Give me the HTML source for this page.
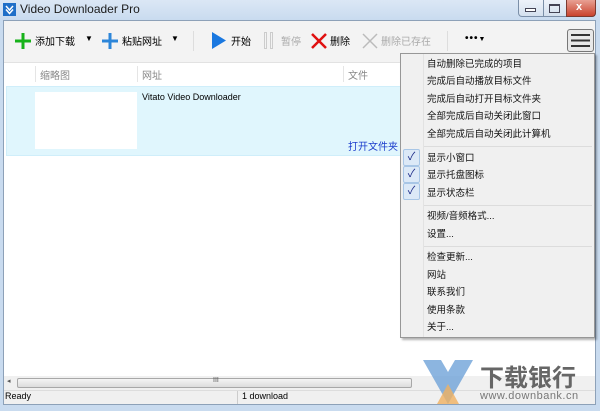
<!DOCTYPE html>
<html><head><meta charset="utf-8"><style>
*{margin:0;padding:0;box-sizing:border-box}
body{width:600px;height:411px;overflow:hidden;background:#c9dbef;font-family:"Liberation Sans","Noto Sans CJK SC",sans-serif;font-size:10px;color:#000;position:relative}
.a{position:absolute}
.t{white-space:nowrap}
.m{position:absolute;left:427px;font-size:9.5px;color:#111;white-space:nowrap;line-height:14px;margin-top:2px}
.c{position:absolute;left:403px;width:17px;height:17px;border:1px solid #a8c6e6;background:#dce9f7;border-radius:2px;color:#1c2a88;text-align:center;font-size:11px;line-height:15px}
</style></head><body>
<div class="a" style="left:0;top:0;width:600px;height:20px;background:linear-gradient(#dbe7f5,#c9dbef)"></div>
<svg class="a" style="left:3px;top:3px" width="13" height="13"><rect width="13" height="13" fill="#1f6fc8"/><path d="M3 3l3.5 4L10 3M3 6.5l3.5 4L10 6.5" stroke="#fff" stroke-width="1.5" fill="none"/></svg>
<div class="a t" style="left:20px;top:2px;font-size:12px;color:#1b1b1b">Video Downloader Pro</div>
<div class="a" style="left:518px;top:0;width:78px;height:17px;border:1px solid #7b8fa8;border-top:none;border-radius:0 0 4px 4px;background:linear-gradient(#eef3fa,#d4e0ee)"></div>
<div class="a" style="left:543px;top:0;width:1px;height:17px;background:#7b8fa8"></div>
<div class="a" style="left:566px;top:0;width:30px;height:17px;background:linear-gradient(#e8a093,#c9432e);border-radius:0 0 4px 0;border:1px solid #7b3a30;border-top:none"></div>
<div class="a t" style="left:576px;top:1px;color:#fff;font-weight:bold;font-size:11px">x</div>
<div class="a" style="left:525px;top:8px;width:11px;height:4px;border:1px solid #445;background:#fff"></div>
<div class="a" style="left:549px;top:4px;width:11px;height:9px;border:1px solid #445;border-top-width:2px"></div>
<div class="a" style="left:3px;top:20px;width:593px;height:385px;background:#fff;border:1px solid #8da1b8"></div>
<div class="a" style="left:4px;top:21px;width:591px;height:42px;background:#f3f3f3;border-bottom:1px solid #e2e2e2"></div>
<svg class="a" style="left:14px;top:32px" width="18" height="18"><path d="M9 1v16M1 9h16" stroke="#17b21a" stroke-width="3"/></svg>
<div class="a t" style="left:35px;top:33px">添加下载</div>
<div class="a t" style="left:85px;top:34px;font-size:8px">▼</div>
<svg class="a" style="left:101px;top:32px" width="18" height="18"><path d="M9 1v16M1 9h16" stroke="#2d86d9" stroke-width="3"/></svg>
<div class="a t" style="left:122px;top:33px">粘贴网址</div>
<div class="a t" style="left:171px;top:34px;font-size:8px">▼</div>
<div class="a" style="left:193px;top:31px;width:1px;height:20px;background:#ddd"></div>
<svg class="a" style="left:211px;top:32px" width="16" height="17"><path d="M1 0L15 8.5 1 17z" fill="#1a78e0"/></svg>
<div class="a t" style="left:231px;top:33px">开始</div>
<div class="a" style="left:264px;top:32px;width:3px;height:17px;border:1px solid #ccc"></div>
<div class="a" style="left:270px;top:32px;width:3px;height:17px;border:1px solid #ccc"></div>
<div class="a t" style="left:281px;top:33px;color:#aaa">暂停</div>
<svg class="a" style="left:311px;top:33px" width="16" height="16"><path d="M1 1l14 14M15 1L1 15" stroke="#e01010" stroke-width="2.5"/></svg>
<div class="a t" style="left:330px;top:33px">删除</div>
<svg class="a" style="left:362px;top:33px" width="16" height="16"><path d="M1 1l14 14M15 1L1 15" stroke="#bbb" stroke-width="1.5"/></svg>
<div class="a t" style="left:381px;top:33px;color:#aaa">删除已存在</div>
<div class="a" style="left:447px;top:31px;width:1px;height:20px;background:#ddd"></div>
<div class="a t" style="left:465px;top:33px;font-weight:bold;font-size:10px;letter-spacing:1px">•••<span style="font-size:7px">▼</span></div>
<div class="a" style="left:567px;top:29px;width:27px;height:23px;border:1px solid #777;border-radius:3px;background:#e8e8e8"></div>
<svg class="a" style="left:571px;top:33px" width="19" height="15"><path d="M0 2h19M0 7.5h19M0 13h19" stroke="#333" stroke-width="2"/></svg>
<div class="a" style="left:35px;top:66px;width:1px;height:16px;background:#e5e5e5"></div>
<div class="a t" style="left:40px;top:67px;color:#888">缩略图</div>
<div class="a" style="left:137px;top:66px;width:1px;height:16px;background:#e5e5e5"></div>
<div class="a t" style="left:142px;top:67px;color:#888">网址</div>
<div class="a" style="left:343px;top:66px;width:1px;height:16px;background:#e5e5e5"></div>
<div class="a t" style="left:348px;top:67px;color:#888">文件</div>
<div class="a" style="left:6px;top:86px;width:400px;height:70px;background:#e0f6fd;border:1px solid #cfeefa"></div>
<div class="a" style="left:35px;top:92px;width:102px;height:57px;background:#fff"></div>
<div class="a t" style="left:142px;top:92px;font-size:9px">Vitato Video Downloader</div>
<div class="a t" style="left:348px;top:138px;color:#1b3dcc">打开文件夹</div>
<div class="a" style="left:4px;top:376px;width:591px;height:14px;background:#f0f0f0"></div>
<div class="a" style="left:17px;top:378px;width:395px;height:10px;background:linear-gradient(#f4f4f4,#dcdcdc);border:1px solid #a8a8a8;border-radius:2px"></div>
<div class="a t" style="left:7px;top:377px;font-size:7px;color:#555">◂</div>
<div class="a t" style="left:213px;top:377px;font-size:7px;color:#555">III</div>
<div class="a" style="left:4px;top:390px;width:591px;height:14px;background:#f0f0f0;border-top:1px solid #ddd"></div>
<div class="a" style="left:237px;top:391px;width:1px;height:13px;background:#ccc"></div>
<div class="a t" style="left:5px;top:391px;font-size:9px">Ready</div>
<div class="a t" style="left:242px;top:391px;font-size:9px">1 download</div>
<div class="a" style="left:400px;top:53px;width:195px;height:285px;background:#f0f0f0;border:1px solid #979797;box-shadow:2px 2px 2px rgba(0,0,0,.3)"></div>
<div class="a" style="left:423px;top:54px;width:1px;height:283px;background:#e2e2e2"></div>
<div class="a" style="left:424px;top:146px;width:168px;height:1px;background:#dcdcdc"></div>
<div class="a" style="left:424px;top:205px;width:168px;height:1px;background:#dcdcdc"></div>
<div class="a" style="left:424px;top:246px;width:168px;height:1px;background:#dcdcdc"></div>
<div class="m" style="top:56px">自动删除已完成的项目</div>
<div class="m" style="top:73px">完成后自动播放目标文件</div>
<div class="m" style="top:91px">完成后自动打开目标文件夹</div>
<div class="m" style="top:108px">全部完成后自动关闭此窗口</div>
<div class="m" style="top:126px">全部完成后自动关闭此计算机</div>
<div class="m" style="top:150px">显示小窗口</div>
<div class="m" style="top:167px">显示托盘图标</div>
<div class="m" style="top:185px">显示状态栏</div>
<div class="m" style="top:208px">视频/音频格式...</div>
<div class="m" style="top:226px">设置...</div>
<div class="m" style="top:249px">检查更新...</div>
<div class="m" style="top:267px">网站</div>
<div class="m" style="top:284px">联系我们</div>
<div class="m" style="top:302px">使用条款</div>
<div class="m" style="top:319px">关于...</div>
<div class="c" style="top:149px">✓</div>
<div class="c" style="top:166px">✓</div>
<div class="c" style="top:183px">✓</div>
<svg class="a" style="left:423px;top:360px" width="50" height="45"><path d="M0 0h18l7 12 7-12h18L25 44z" fill="#6fa3d8" opacity=".8"/><path d="M14 44L25 24 36 44z" fill="#f0b060" opacity=".8"/></svg>
<div class="a t" style="left:480px;top:358px;font-size:24px;font-weight:bold;color:#666">下载银行</div>
<div class="a t" style="left:480px;top:390px;font-size:11px;color:#777;letter-spacing:.5px">www.downbank.cn</div>
</body></html>
